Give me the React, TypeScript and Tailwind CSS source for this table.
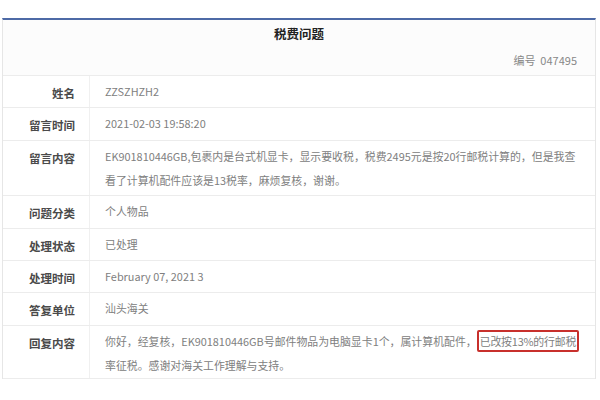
const font = { fontFamily: '"Noto Sans CJK SC", "Noto Sans", sans-serif' };

type Row = { label: string; value: React.ReactNode; h: string };

const rows: Row[] = [
  { label: "姓名", value: "ZZSZHZH2", h: "h-[32px]" },
  { label: "留言时间", value: "2021-02-03 19:58:20", h: "h-[33px]" },
  {
    label: "留言内容",
    value: (
      <>
        EK901810446GB,包裹内是台式机显卡，显示要收税，税费2495元是按20行邮税计算的，但是我查
        <br />
        看了计算机配件应该是13税率，麻烦复核，谢谢。
      </>
    ),
    h: "h-[55px]",
  },
  { label: "问题分类", value: "个人物品", h: "h-[33px]" },
  { label: "处理状态", value: "已处理", h: "h-[32px]" },
  { label: "处理时间", value: "February 07, 2021 3", h: "h-[32px]" },
  { label: "答复单位", value: "汕头海关", h: "h-[33px]" },
  {
    label: "回复内容",
    value: (
      <>
        你好，经复核，EK901810446GB号邮件物品为电脑显卡1个，属计算机配件，
        <span className="rounded-[2px] border-2 border-[#c8302c] px-[1px] py-[1px] tracking-[-0.2px]">
          已改按13%的行邮税
        </span>
        <br />
        率征税。感谢对海关工作理解与支持。
      </>
    ),
    h: "h-[53px]",
  },
];

export default function App() {
  return (
    <div className="h-[400px] w-[600px] overflow-hidden bg-white" style={font}>
      <div className="ml-[2px] mt-[18px] w-[594px] border-x border-[#e6e6e6] border-t-2 border-t-[#4d6aa6] bg-white">
        <div className="flex h-[56px] flex-col border-b border-[#ececec] bg-[#fcfcfc]">
          <div className="pt-[5px] text-center text-[12.5px] font-bold text-[#222]">税费问题</div>
          <div className="mt-auto pb-[7px] pr-[18px] text-right text-[11px] text-[#888]">
            编号&nbsp;&nbsp;047495
          </div>
        </div>
        {rows.map((r) => (
          <div key={r.label} className={`flex border-b border-[#ececec] ${r.h}`}>
            <div className="w-[87px] shrink-0 border-r border-[#f0f0f0] pr-[14px] pt-[9px] text-right text-[11.5px] font-semibold text-[#4a4a4a]">
              {r.label}
            </div>
            <div className="-mt-[6px] pl-[15px] pt-[9px] text-[10.9px] leading-[24px] text-[#808080]">
              {r.value}
            </div>
          </div>
        ))}
      </div>
    </div>
  );
}
